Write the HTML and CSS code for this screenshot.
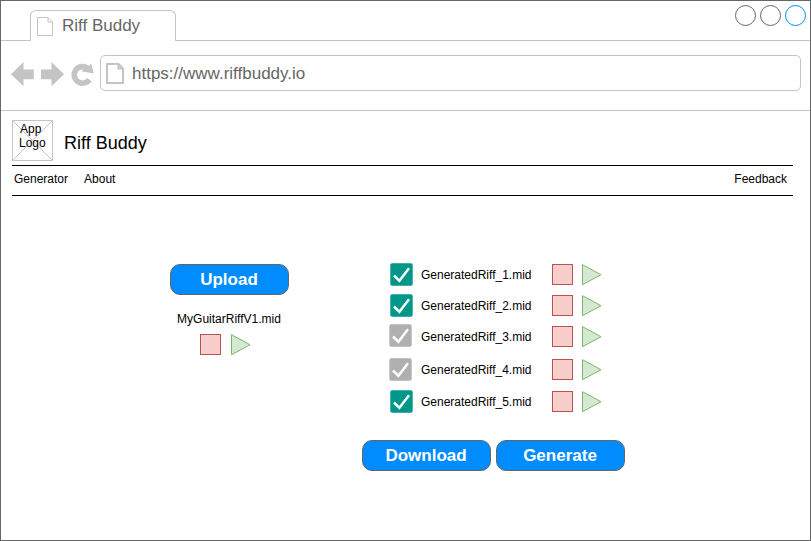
FILE: index.html
```html
<!DOCTYPE html>
<html lang="en">
<head>
<meta charset="utf-8">
<title>Riff Buddy</title>
<link rel="stylesheet" href="styles.css">
</head>
<body>
<svg class="defs" aria-hidden="true">
  <symbol id="check" viewBox="0 0 23 23"><rect x=".3" y=".3" width="22.4" height="22.4" rx="1.8" fill="currentColor"/><path d="M4 12.5L9.4 17.8L19 5.2" fill="none" stroke="#fff" stroke-width="2.5"/></symbol>
  <symbol id="play" viewBox="0 0 20 22"><path d="M.5 .7V20.7L19 10.7Z" fill="#d5e8d4" stroke="#82b366"/></symbol>
</svg>
<div class="window">
  <div class="tabbar">
    <div class="tab">
      <svg class="tab-page" width="16" height="19" viewBox="0 0 16 19"><path d="M.5 .5H11L15.5 5V18.5H.5ZM11 .5V5H15.5" fill="none" stroke="#c4c4c4"/></svg>
      <span>Riff Buddy</span>
    </div>
    <div class="controls"><i></i><i></i><i class="active"></i></div>
  </div>
  <div class="toolbar">
    <svg class="nav" width="84" height="26" viewBox="0 0 84 26" fill="#c4c4c4">
      <path d="M0 13.200L12.500 1V8.500H22.800V18.300H12.500V25.300Z"/>
      <path d="M53 13.200L40.500 1V8.500H30V18.300H40.500V25.300Z"/>
      <path d="M77.200 7.800A8.300 8.300 0 1 0 78.400 18.600" fill="none" stroke="#c4c4c4" stroke-width="5.600"/>
      <path d="M80.200 2.800L82.800 12.500L70.300 10.300Z"/>
    </svg>
    <div class="address">
      <svg width="18" height="21" viewBox="0 0 18 21"><path d="M1 1H12.500L17 5.500V20H1ZM12.500 1V5.500H17" fill="none" stroke="#c4c4c4" stroke-width="2"/></svg>
      <span>https://www.riffbuddy.io</span>
    </div>
  </div>
  <main>
    <header>
      <div class="logo">
        <svg width="41" height="41" viewBox="0 0 41 41"><path d="M.5 .5H40.500V40.500H.5ZL40.500 40.500M40.500 .5L.5 40.500" fill="none" stroke="#c4c4c4"/></svg>
        <div class="logo-text"><span>App</span><span>Logo</span></div>
      </div>
      <h1>Riff Buddy</h1>
    </header>
    <nav class="menu"><span>Generator</span><span>About</span><span class="feedback">Feedback</span></nav>
    <div class="content">
      <section class="source">
        <button>Upload</button>
        <div class="filename">MyGuitarRiffV1.mid</div>
        <div class="player"><i class="stop"></i><svg class="play"><use href="#play"/></svg></div>
      </section>
      <section class="results">
        <div class="riff"><svg class="check"><use href="#check"/></svg><span>GeneratedRiff_1.mid</span><i class="stop"></i><svg class="play"><use href="#play"/></svg></div>
        <div class="riff"><svg class="check"><use href="#check"/></svg><span>GeneratedRiff_2.mid</span><i class="stop"></i><svg class="play"><use href="#play"/></svg></div>
        <div class="riff tall"><svg class="check off raised"><use href="#check"/></svg><span>GeneratedRiff_3.mid</span><i class="stop"></i><svg class="play"><use href="#play"/></svg></div>
        <div class="riff mid"><svg class="check off"><use href="#check"/></svg><span>GeneratedRiff_4.mid</span><i class="stop"></i><svg class="play"><use href="#play"/></svg></div>
        <div class="riff"><svg class="check"><use href="#check"/></svg><span>GeneratedRiff_5.mid</span><i class="stop"></i><svg class="play"><use href="#play"/></svg></div>
        <div class="actions"><button>Download</button><button>Generate</button></div>
      </section>
    </div>
  </main>
</div>
</body>
</html>
```
FILE: styles.css
```css
* { box-sizing: border-box; }
body { margin: 0; background: #fff; color: #000; font: 12px/14px "Liberation Sans", Arial, sans-serif; }
svg { display: block; flex: none; }
.defs { position: absolute; width: 0; height: 0; }
.window { width: 811px; height: 541px; border: 1px solid #666; overflow: hidden; }
.tabbar { display: flex; justify-content: space-between; height: 40px; padding: 9px 4px 0 29px; border-bottom: 1px solid #c4c4c4; }
.tab { display: flex; width: 146px; height: 31px; padding: 6px 0 0 6px; border: 1px solid #c4c4c4; border-bottom: 0; border-radius: 6px 6px 0 0; background: #fff; font-size: 17px; line-height: 20px; color: #666; }
.tab span { margin: -1px 0 0 9px; }
.controls { display: flex; gap: 4px; margin-top: -5px; }
.controls i { width: 21px; height: 21px; border: 1px solid #666; border-radius: 50%; }
.controls .active { border-color: #008cff; }
.toolbar { display: flex; height: 70px; padding: 14px 9px 0 10px; border-bottom: 1px solid #c4c4c4; }
.nav { margin: 6px 5px 0 0; }
.address { display: flex; align-items: center; width: 701px; height: 36px; padding-left: 5px; border: 1px solid #c4c4c4; border-radius: 5px; font-size: 17px; line-height: 20px; color: #666; }
.address span { margin: 2px 0 0 8px; }
main { width: 781px; margin: 9px 0 0 11px; }
header { display: flex; height: 45px; }
.logo { display: grid; width: 41px; height: 41px; }
.logo > * { grid-area: 1 / 1; }
.logo-text { display: flex; flex-direction: column; padding: 2px 0 0 7px; }
.logo-text span:first-child { padding-left: 1px; }
h1 { margin: 12px 0 0 11px; font-size: 18px; line-height: 22px; font-weight: normal; }
.menu { display: flex; gap: 16px; height: 31px; padding: 6px 6px 0 2px; border: solid #000; border-width: 1px 0; }
.feedback { margin-left: auto; }
.content { display: flex; padding: 68px 0 0 158px; }
.source { width: 119px; margin-right: 73px; }
button { display: block; width: 119px; height: 31px; padding: 0 1px 0 0; border: 1px solid #666; border-radius: 10px; background: #008cff; color: #fff; font: bold 17px/20px "Liberation Sans", Arial, sans-serif; }
.filename { margin-top: 17px; padding-right: 1px; text-align: center; }
.player { display: flex; margin: 8px 0 0 30px; }
.stop { width: 21px; height: 21px; flex: none; border: 1px solid #b85450; background: #f8cecc; }
.play { width: 20px; height: 22px; margin-left: 9px; }
.player .play { margin-left: 10px; }
.riff { display: flex; height: 31px; padding-left: 28px; }
.riff span { width: 139px; padding: 4px 0 0 8px; }
.check { width: 23px; height: 23px; margin-top: -1px; color: #009688; }
.off { margin: -1px 1px 0 -1px; color: #b0b0b0; }
.raised { margin-top: -2px; }
.tall { height: 33px; }
.mid { height: 32px; }
.actions { display: flex; gap: 5px; margin-top: 18px; }
.actions button { width: 129px; }
```
